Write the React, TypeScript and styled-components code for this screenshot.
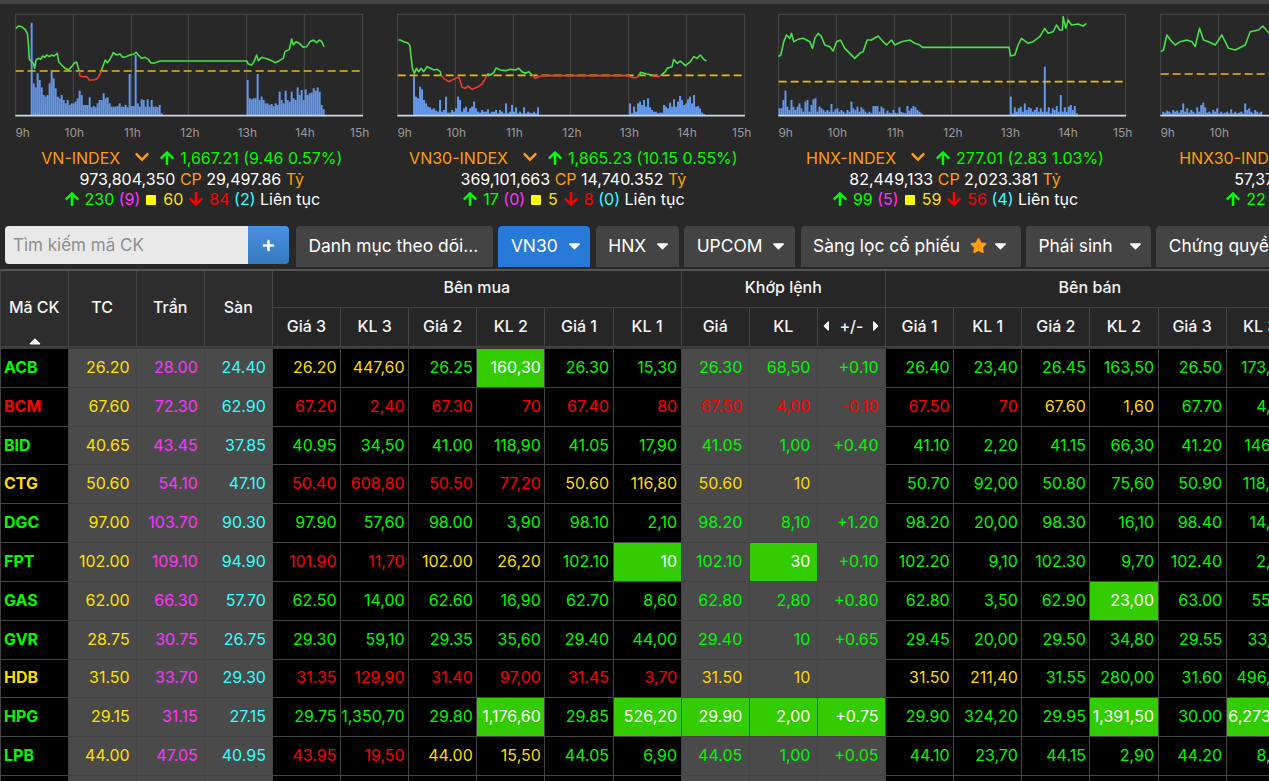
import React from "react";
import styled, { createGlobalStyle } from "styled-components";
import { FaArrowUp, FaArrowDown, FaCaretDown, FaCaretLeft, FaCaretRight, FaCaretUp, FaChevronDown, FaPlus, FaStar } from "react-icons/fa";

const Global = createGlobalStyle`
  html, body { margin: 0; padding: 0; height: 100%; overflow: hidden; background: #282828; }
  body { font-family: Inter, "Noto Sans", sans-serif; font-size: 16px; color: #fff; }
  * { box-sizing: border-box; }
`;

const Page = styled.div`
  width: 1269px;
  height: 781px;
  overflow: hidden;
  background: #282828;
`;
const TopStrip = styled.div`
  height: 4px;
  background: #444;
`;
const Panels = styled.div`
  display: flex;
  height: 222px;
  width: 1600px;
`;
const Panel = styled.div`
  flex: 0 0 381.6px;
  width: 381.6px;
  display: flex;
  flex-direction: column;
  align-items: stretch;
`;
const ChartSvg = styled.svg`
  display: block;
  width: 381.6px;
  height: 140px;
  margin-bottom: 4px;
  overflow: hidden;
  flex: none;
`;
const AxisLabel = styled.text`
  font-family: Inter, sans-serif;
  font-size: 36px;
  fill: #9a9a9a;
  text-anchor: middle;
`;
const InfoLine = styled.div`
  height: 20.5px;
  line-height: 20.5px;
  text-align: center;
  white-space: nowrap;
  font-size: 16px;
  width: 381.6px;
  padding-left: 2px;
`;
const Tint = styled.span<{ $c: string }>`
  color: ${(p) => p.$c};
`;
const IndexName = styled.span`
  color: #ff9d0a;
`;
const Chevron = styled(FaChevronDown)`
  color: #ff9d0a;
  font-size: 16px;
  margin: 0 9px 0 14px;
  vertical-align: -1px;
`;
const Up = styled(FaArrowUp)`
  color: #00ff00;
  font-size: 16px;
  margin-right: 5px;
  vertical-align: -2px;
`;
const Down = styled(FaArrowDown)`
  color: #ff0000;
  font-size: 16px;
  margin: 0 5px 0 5px;
  vertical-align: -2px;
`;
const Square = styled.span`
  display: inline-block;
  width: 10px;
  height: 10px;
  background: #ffff00;
  border-radius: 1px;
  margin: 0 7px 0 6px;
`;
const Toolbar = styled.div`
  display: flex;
  align-items: flex-start;
  gap: 5.4px;
  height: 43px;
  padding-left: 5px;
  width: 1500px;
`;
const SearchGroup = styled.div`
  display: flex;
  width: 284px;
  height: 38px;
  margin-right: 1.6px;
`;
const SearchInput = styled.div`
  width: 243px;
  height: 38px;
  background: #e9e9e9;
  color: #8f8f8f;
  border-radius: 4px 0 0 4px;
  padding-left: 8px;
  line-height: 38px;
  font-size: 17px;
`;
const PlusButton = styled.div`
  width: 41px;
  height: 38px;
  background: linear-gradient(#4a90e2, #357abd);
  border-radius: 0 4px 4px 0;
  display: flex;
  align-items: center;
  justify-content: center;
  color: #fff;
  font-size: 13px;
`;
const TabButton = styled.div<{ $active?: boolean; $w: number }>`
  flex: none;
  width: ${(p) => p.$w}px;
  height: 41px;
  padding-left: 12.5px;
  padding-bottom: 2px;
  background: ${(p) => (p.$active ? "#2979d9" : "#444")};
  border-radius: 4px 4px 0 0;
  display: flex;
  align-items: center;
  font-size: 17.4px;
  color: #fff;
  white-space: nowrap;
`;
const Caret = styled(FaCaretDown)<{ $gap: number }>`
  flex: none;
  margin-left: ${(p) => p.$gap}px;
  font-size: 19px;
  color: #fff;
`;
const Star = styled(FaStar)`
  flex: none;
  color: #ff9d0a;
  font-size: 17px;
  margin-left: 10px;
`;
const TableWrap = styled.div`
  width: 1295.5px;
  border-top: 2px solid #555;
  border-left: 1px solid #444;
`;
const columns = "67.5px repeat(18, 68.13px)";
const HeadGrid = styled.div`
  display: grid;
  grid-template-columns: ${columns};
  grid-template-rows: 36.5px 39.5px;
  border-bottom: 2px solid #3a3a3a;
  box-shadow: inset 0 -1px 0 #1b1b1b;
`;
const HeadCell = styled.div<{ $col: string; $row: string; $main?: boolean; $lift?: boolean }>`
  grid-column: ${(p) => p.$col};
  grid-row: ${(p) => p.$row};
  position: relative;
  display: flex;
  align-items: center;
  justify-content: center;
  gap: 5px;
  padding-bottom: ${(p) => (p.$lift ? 3 : 1)}px;
  background: ${(p) => (p.$main ? "#2d2d2d" : "#262626")};
  border-right: 1px solid #444;
  border-bottom: 1px solid #444;
  font-size: 16px;
  font-weight: 500;
  color: #f4f4f4;
  white-space: nowrap;
`;
const SortMark = styled(FaCaretUp)`
  position: absolute;
  left: 25px;
  bottom: -4px;
  font-size: 18px;
  color: #fff;
`;
const SmallCaret = styled.span`
  display: inline-flex;
  font-size: 16px;
  color: #fff;
`;
const Row = styled.div`
  display: grid;
  grid-template-columns: ${columns};
  height: 38.82px;
`;
const toneColor: Record<string, string> = {
  g: "#00f800",
  r: "#ff0000",
  y: "#ffd800",
  h: "#ffffff",
  c: "#ffe000",
  m: "#ff33ff",
  f: "#33ffff",
};
const Cell = styled.div<{ $tone: string; $gray: boolean; $pad: number }>`
  display: flex;
  align-items: center;
  justify-content: flex-end;
  padding-right: ${(p) => p.$pad}px;
  padding-bottom: 2px;
  background: ${(p) => (p.$tone === "h" ? "#33cc00" : p.$gray ? "#4a4a4a" : "#000")};
  color: ${(p) => toneColor[p.$tone] || "#fff"};
  border-right: 1px solid #444;
  border-bottom: 1px solid #444;
  font-size: 16px;
  white-space: nowrap;
`;
const SymbolCell = styled.div<{ $tone: string }>`
  display: flex;
  align-items: center;
  padding-left: 3px;
  padding-bottom: 2px;
  background: #000;
  color: ${(p) => toneColor[p.$tone]};
  border-right: 1px solid #444;
  border-bottom: 1px solid #444;
  font-weight: 700;
  font-size: 16px;
`;

type Bars = { start: number; tops: number[] };
type ChartDef = {
  dx: number;
  dash: number;
  lines: { c: string; p: string }[];
  bars: Bars[];
};

const G = "#48e048";
const R = "#f03a2e";

const charts: ChartDef[] = [
  {
    dx: 0,
    dash: 213,
    lines: [
      { c: G, p: "48,85 55,78 65,80 75,88 82,100 85,130 88,178 95,185 100,190 104,205 108,180 115,175 122,178 128,168 135,172 140,165 148,170 155,165 162,168 172,160 176,185 185,195 195,205 205,210 215,200 222,190 230,186 235,205 238,213" },
      { c: R, p: "238,213 240,228 250,230 260,230 268,240 280,240 292,236 300,222 304,213" },
      { c: G, p: "304,213 310,195 316,180 322,188 330,178 340,158 350,165 360,162 368,172 378,170 390,165 402,162 408,157 415,165 425,175 435,172 445,178 452,188 460,190 470,187 480,183 740,183 745,192 755,195 762,185 770,165 775,182 785,172 800,176 815,182 825,188 838,182 850,175 855,155 868,148 875,117 880,135 888,125 898,130 910,142 920,140 930,125 940,120 950,128 958,120 965,125 972,140" },
    ],
    bars: [
      { start: 92, tops: [68, 250, 262, 220, 240, 262, 285, 290, 285, 250, 210, 235, 265, 290, 295, 285, 300, 310, 300, 315, 310, 310, 305, 295, 272, 285, 315, 315, 315, 292, 322, 318, 322, 310, 300, 300, 280, 295, 292, 310, 320, 320, 320, 318, 310, 320, 320, 315, 322, 222, 318, 318, 165, 310, 320, 298, 300, 320, 298, 320, 300, 320, 320, 322, 315, 340] },
      { start: 740, tops: [240, 295, 298, 295, 295, 222, 300, 290, 300, 310, 310, 315, 312, 318, 310, 315, 275, 300, 310, 272, 300, 305, 275, 295, 300, 262, 285, 270, 300, 268, 285, 280, 278, 265, 272, 262, 275, 315, 328] },
    ],
  },
  {
    dx: 25.2,
    dash: 226,
    lines: [
      { c: G, p: "24,120 30,120 40,125 50,128 58,135 62,170 66,205 72,220 78,205 85,215 92,205 100,215 110,200 120,205 130,210 140,208 150,215 152,226" },
      { c: R, p: "152,226 160,235 175,245 190,238 205,230 215,262 225,265 232,258 245,268 260,262 275,252 285,235 290,226" },
      { c: G, p: "290,226 292,222 300,225 310,218 317,204 330,210 345,212 360,208 375,210 385,205 395,215 405,220 415,215 425,225" },
      { c: R, p: "425,225 428,228 435,235 445,230 455,227 715,227 725,233 740,232 748,226" },
      { c: G, p: "748,226 750,217 770,222 785,225" },
      { c: R, p: "785,228 805,230 812,226" },
      { c: G, p: "812,226 825,215 830,205 845,200 850,178 860,190 870,183 885,197 900,185 910,170 920,175 930,165 940,178 948,183" },
    ],
    bars: [
      { start: 68, tops: [225, 290, 295, 260, 268, 300, 310, 320, 322, 328, 325, 332, 335, 300, 335, 330, 290, 338, 338, 330, 335, 325, 290, 300, 335, 325, 320, 335, 325, 320, 305, 325, 335, 338, 330, 335, 335, 328, 340, 335, 335, 330, 340, 330, 335, 340, 310, 340, 335, 315, 335, 322, 340, 335, 340, 322, 340, 335, 338, 340, 335, 340, 322] },
      { start: 716, tops: [310, 340, 320, 335, 310, 305, 315, 300, 320, 295, 322, 330, 335, 335, 340, 338, 338, 315, 320, 325, 308, 320, 298, 320, 305, 288, 300, 315, 310, 298, 290, 310, 285, 320, 318, 325, 338, 342] },
    ],
  },
  {
    dx: 20.4,
    dash: 245,
    lines: [
      { c: G, p: "26,170 33,165 42,125 50,105 60,115 65,100 72,125 85,118 100,115 110,120 120,125 128,145 135,115 145,100 155,110 165,135 180,140 190,153 200,125 212,120 225,145 240,160 255,175 270,160 280,155 292,120 305,120 325,108 340,125 350,135 365,120 375,135 395,125 420,120 435,130 450,135 458,142 718,142 722,168 735,165 745,135 755,115 775,130 790,125 810,110 825,85 835,100 850,95 860,75 870,90 878,90 880,50 888,85 895,60 905,75 925,72 940,78 950,70" },
    ],
    bars: [
      { start: 26, tops: [325, 325, 300, 272, 320, 330, 300, 320, 330, 320, 310, 325, 335, 305, 300, 335, 315, 298, 295, 335, 320, 325, 330, 335, 330, 335, 312, 335, 328, 325, 335, 330, 335, 340, 330, 335, 305, 325, 330, 320, 335, 322, 328, 335, 340, 335, 340, 318, 318, 318, 335, 320, 325, 340, 332, 338, 340, 330, 338, 340, 322, 336, 338, 340, 318, 332, 325, 318, 322, 330, 335, 340] },
      { start: 720, tops: [290, 340, 322, 335, 325, 320, 335, 310, 330, 322, 325, 335, 330, 322, 335, 325, 335, 200, 335, 322, 340, 325, 330, 318, 335, 285, 335, 322, 335, 320, 315, 330, 318, 340] },
    ],
  },
  {
    dx: -1124.4,
    dash: 222,
    lines: [
      { c: G, p: "1172,155 1180,150 1190,105 1205,125 1215,135 1230,125 1250,120 1265,125 1275,140 1288,85 1300,120 1315,125 1335,135 1355,105 1375,145 1395,150 1425,135 1440,95 1465,90 1478,78 1497,100" },
    ],
    bars: [
      { start: 1176, tops: [335, 338, 332, 335, 340, 330, 335, 332, 338, 330, 310, 335, 325, 338, 330, 335, 340, 322, 335, 315, 308, 322, 338, 335, 340, 330, 335, 325, 340, 335, 340, 338, 335, 340, 328, 340, 335, 340, 338, 335, 340, 310, 330, 325, 335, 340, 330, 335, 340, 335] },
    ],
  },
];

function Chart({ def }: { def: ChartDef }) {
  const toX = (x: number) => x + def.dx;
  const shift = (p: string) =>
    p
      .split(" ")
      .map((pt) => {
        const [x, y] = pt.split(",").map(Number);
        return `${toX(x)},${y}`;
      })
      .join(" ");
  const vgrid = [220, 394, 565, 740, 913];
  const labels: [string, number][] = [
    ["9h", 68],
    ["10h", 223],
    ["11h", 397],
    ["12h", 570],
    ["13h", 742],
    ["14h", 915],
    ["15h", 1079],
  ];
  return (
    <ChartSvg viewBox="0 12 1144.8 420">
      <rect x={47} y={43} width={1041} height={304} fill="none" stroke="#484848" strokeWidth={3} />
      {vgrid.map((x) => (
        <line key={x} x1={x} x2={x} y1={43} y2={347} stroke="#484848" strokeWidth={3} />
      ))}
      {def.bars.map((b, i) =>
        b.tops.map((t, j) => (
          <rect key={`${i}-${j}`} x={toX(b.start + j * 6)} y={t} width={6} height={347 - t} fill="#6398ea" />
        ))
      )}
      <line x1={47} x2={1088} y1={def.dash} y2={def.dash} stroke="#e9b90c" strokeWidth={5} strokeDasharray="24 12" />
      {def.lines.map((l, i) => (
        <polyline key={i} points={shift(l.p)} fill="none" stroke={l.c} strokeWidth={4.8} strokeLinejoin="round" />
      ))}
      <line x1={46} x2={1089} y1={347} y2={347} stroke="#d0d6e4" strokeWidth={5} />
      {labels.map(([t, x]) => (
        <AxisLabel key={t} x={x} y={410}>
          {t}
        </AxisLabel>
      ))}
    </ChartSvg>
  );
}

type Info = {
  name: string;
  value: string;
  vol: string;
  money: string;
  up: string;
  ceil: string;
  same: string;
  down: string;
  floor: string;
};
const infos: Info[] = [
  { name: "VN-INDEX", value: "1,667.21 (9.46 0.57%)", vol: "973,804,350", money: "29,497.86", up: "230", ceil: "(9)", same: "60", down: "84", floor: "(2)" },
  { name: "VN30-INDEX", value: "1,865.23 (10.15 0.55%)", vol: "369,101,663", money: "14,740.352", up: "17", ceil: "(0)", same: "5", down: "8", floor: "(0)" },
  { name: "HNX-INDEX", value: "277.01 (2.83 1.03%)", vol: "82,449,133", money: "2,023.381", up: "99", ceil: "(5)", same: "59", down: "56", floor: "(4)" },
  { name: "HNX30-INDEX", value: "502.3 (3.21 0.64%)", vol: "57,374,120", money: "1,620.745", up: "22", ceil: "(1)", same: "3", down: "5", floor: "(0)" },
];

const rows: string[] = [
  "gACB c26.20 m28.00 f24.40 y26.20 y447,60 g26.25 h160,30 g26.30 g15,30 g26.30 g68,50 g+0.10 g26.40 g23,40 g26.45 g163,50 g26.50 g173,20",
  "rBCM c67.60 m72.30 f62.90 r67.20 r2,40 r67.30 r70 r67.40 r80 r67.50 r4,00 r-0.10 r67.50 r70 y67.60 y1,60 g67.70 g4,30",
  "gBID c40.65 m43.45 f37.85 g40.95 g34,50 g41.00 g118,90 g41.05 g17,90 g41.05 g1,00 g+0.40 g41.10 g2,20 g41.15 g66,30 g41.20 g146,10",
  "yCTG c50.60 m54.10 f47.10 r50.40 r608,80 r50.50 r77,20 y50.60 y116,80 y50.60 y10 - g50.70 g92,00 g50.80 g75,60 g50.90 g118,40",
  "gDGC c97.00 m103.70 f90.30 g97.90 g57,60 g98.00 g3,90 g98.10 g2,10 g98.20 g8,10 g+1.20 g98.20 g20,00 g98.30 g16,10 g98.40 g14,20",
  "gFPT c102.00 m109.10 f94.90 r101.90 r11,70 y102.00 y26,20 g102.10 h10 g102.10 h30 g+0.10 g102.20 g9,10 g102.30 g9,70 g102.40 g2,50",
  "gGAS c62.00 m66.30 f57.70 g62.50 g14,00 g62.60 g16,90 g62.70 g8,60 g62.80 g2,80 g+0.80 g62.80 g3,50 g62.90 h23,00 g63.00 g55,10",
  "gGVR c28.75 m30.75 f26.75 g29.30 g59,10 g29.35 g35,60 g29.40 g44,00 g29.40 g10 g+0.65 g29.45 g20,00 g29.50 g34,80 g29.55 g33,70",
  "yHDB c31.50 m33.70 f29.30 r31.35 r129,90 r31.40 r97,00 r31.45 r3,70 y31.50 y10 - y31.50 y211,40 g31.55 g280,00 g31.60 g496,30",
  "gHPG c29.15 m31.15 f27.15 g29.75 g1,350,70 g29.80 h1,176,60 g29.85 h526,20 h29.90 h2,00 h+0.75 g29.90 g324,20 g29.95 h1,391,50 g30.00 h6,273,10",
  "gLPB c44.00 m47.05 f40.95 r43.95 r19,50 y44.00 y15,50 g44.05 g6,90 g44.05 g1,00 g+0.05 g44.10 g23,70 g44.15 g2,90 g44.20 g8,60",
  "gMBB c- m- f- - - - - - - - - - - - - - - -",
];

const padFor = (i: number) => (i <= 3 ? 6 : i >= 10 && i <= 12 ? 6.5 : 3.5);
const isGray = (i: number) => (i >= 1 && i <= 3) || (i >= 10 && i <= 12);

const subHeads = ["Giá 3", "KL 3", "Giá 2", "KL 2", "Giá 1", "KL 1", "Giá", "KL", "+/-", "Giá 1", "KL 1", "Giá 2", "KL 2", "Giá 3", "KL 3"];

export default function App() {
  return (
    <Page>
      <Global />
      <TopStrip />
      <Panels>
        {infos.map((info, i) => (
          <Panel key={info.name}>
            <Chart def={charts[i]} />
            <InfoLine>
              <IndexName>{info.name}</IndexName>
              <Chevron />
              <Up />
              <Tint $c="#00f800">{info.value}</Tint>
            </InfoLine>
            <InfoLine>
              {info.vol} <Tint $c="#ff9d0a">CP</Tint> {info.money} <Tint $c="#ff9d0a">Tỷ</Tint>
            </InfoLine>
            <InfoLine>
              <Up />
              <Tint $c="#00ff00">{info.up}</Tint> <Tint $c="#ff33ff">{info.ceil}</Tint>
              <Square />
              <Tint $c="#ffe000">{info.same}</Tint>
              <Down />
              <Tint $c="#ff0000">{info.down}</Tint> <Tint $c="#33ffff">{info.floor}</Tint> Liên tục
            </InfoLine>
          </Panel>
        ))}
      </Panels>
      <Toolbar>
        <SearchGroup>
          <SearchInput>Tìm kiếm mã CK</SearchInput>
          <PlusButton>
            <FaPlus />
          </PlusButton>
        </SearchGroup>
        <TabButton $w={197}>Danh mục theo dõi...</TabButton>
        <TabButton $w={92} $active>
          VN30
          <Caret $gap={7} />
        </TabButton>
        <TabButton $w={83}>
          HNX
          <Caret $gap={7} />
        </TabButton>
        <TabButton $w={111}>
          UPCOM
          <Caret $gap={7} />
        </TabButton>
        <TabButton $w={220}>
          Sàng lọc cổ phiếu
          <Star />
          <Caret $gap={4} />
        </TabButton>
        <TabButton $w={125}>
          Phái sinh
          <Caret $gap={13} />
        </TabButton>
        <TabButton $w={160}>Chứng quyền</TabButton>
      </Toolbar>
      <TableWrap>
        <HeadGrid>
          <HeadCell $main $lift $col="1" $row="1 / span 2">
            Mã CK
            <SortMark />
          </HeadCell>
          <HeadCell $main $lift $col="2" $row="1 / span 2">TC</HeadCell>
          <HeadCell $main $lift $col="3" $row="1 / span 2">Trần</HeadCell>
          <HeadCell $main $lift $col="4" $row="1 / span 2">Sàn</HeadCell>
          <HeadCell $lift $col="5 / span 6" $row="1">Bên mua</HeadCell>
          <HeadCell $lift $col="11 / span 3" $row="1">Khớp lệnh</HeadCell>
          <HeadCell $lift $col="14 / span 6" $row="1">Bên bán</HeadCell>
          {subHeads.map((h, i) => (
            <HeadCell key={i} $col={String(i + 5)} $row="2">
              {h === "+/-" ? (
                <>
                  <SmallCaret>
                    <FaCaretLeft />
                  </SmallCaret>
                  {h}
                  <SmallCaret>
                    <FaCaretRight />
                  </SmallCaret>
                </>
              ) : (
                h
              )}
            </HeadCell>
          ))}
        </HeadGrid>
        {rows.map((r) => {
          const parts = r.split(" ");
          const sym = parts[0];
          return (
            <Row key={sym}>
              <SymbolCell $tone={sym[0]}>{sym === "gMBB" ? "" : sym.slice(1)}</SymbolCell>
              {parts.slice(1).map((c, idx) => {
                const i = idx + 1;
                const blank = c === "-" || (c.length === 2 && c[1] === "-");
                return (
                  <Cell key={i} $tone={c[0]} $gray={isGray(i)} $pad={padFor(i)}>
                    {blank ? "" : c.slice(1)}
                  </Cell>
                );
              })}
            </Row>
          );
        })}
      </TableWrap>
    </Page>
  );
}
